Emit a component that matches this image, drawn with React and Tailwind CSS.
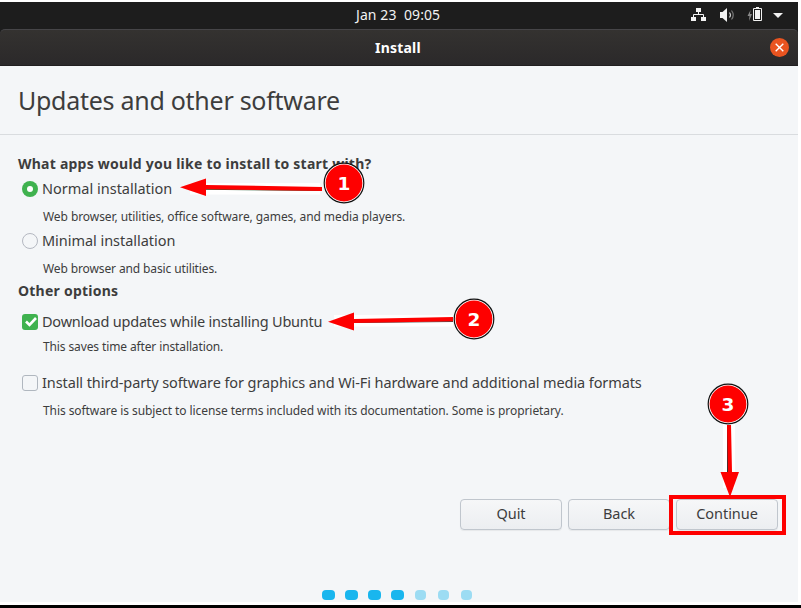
import React from "react";

function Heading({ className = "", children }) {
  return <h2 className={`flex h-5 items-center text-[14px] font-bold tracking-[0.235px] whitespace-nowrap ${className}`}>{children}</h2>;
}

function Option({ className = "", labelClass = "", control, children }) {
  return (
    <label className={`flex h-5 items-center gap-1 pl-1 text-[14.5px] whitespace-nowrap ${className}`}>
      {control}
      <span className={labelClass}>{children}</span>
    </label>
  );
}

function Note({ className = "", children }) {
  return <p className={`flex h-5 items-center pl-[25px] text-[12px] whitespace-nowrap ${className}`}>{children}</p>;
}

function Button({ children, className = "" }) {
  return (
    <button className={`h-[31px] w-[102px] rounded-[4px] border border-[#c0c6cd] bg-linear-to-b from-[#f6f7f8] to-[#eceef1] pb-px text-[14.5px] tracking-[-0.05px] shadow-[0_1px_1px_rgba(0,0,0,0.06)] ${className}`}>
      {children}
    </button>
  );
}

function Badge({ x, y, n }) {
  return (
    <g>
      <circle cx={x} cy={y} r="19.8" fill="#fff" stroke="#111" strokeWidth="1.200" />
      <circle cx={x} cy={y} r="18.4" fill="#fe0000" />
      <text x={x} y={y + 7} textAnchor="middle" fill="#fff" fontFamily="DejaVu Sans, sans-serif" fontWeight="700" fontSize="18.5">{n}</text>
    </g>
  );
}

function Annotations() {
  return (
    <svg className="pointer-events-none absolute top-0 left-0" width="801" height="608" viewBox="0 0 801 608">
      <path d="M190 183H320V194.500H190Z" fill="#fff" />
      <path d="M205 189.300L322 190.500" stroke="#235c35" strokeWidth="1" />
      <path d="M180 187.300L206 178.500V185L322 187V191L206 189.300V196Z" fill="#fe0000" />
      <path d="M334 315H453V326.500H334Z" fill="#fff" />
      <path d="M354 322.500L453 321.500" stroke="#444" strokeWidth="1" />
      <path d="M328 321.800L354 312.500V319L453 317V321.300L354 323V330.500Z" fill="#fe0000" />
      <path d="M723 424H735V488H723Z" fill="#fff" />
      <path d="M727.500 425V473" stroke="#333" strokeWidth="1" />
      <path d="M727 425H731L732 472H739L730 497L720.500 472H728Z" fill="#fe0000" />
      <rect x="671" y="497" width="113" height="36" fill="none" stroke="#fe0000" strokeWidth="4" />
      <Badge x={344} y={183} n="1" />
      <Badge x={474} y={319} n="2" />
      <Badge x={728} y={404} n="3" />
    </svg>
  );
}

function TrayIcons() {
  return (
    <svg className="ml-auto" width="107" height="27" viewBox="691 2 107 27" fill="#f2f2f2">
      <path d="M696 8h5v4h-5zM691 17h5v4h-5zM701 17h5v4h-5z" />
      <path d="M698.500 12v3M693.500 17v-2.500h10v2.500" fill="none" stroke="#f2f2f2" strokeWidth="1" />
      <path d="M720 12h2.500l4.500-4v14l-4.500-4H720z" />
      <path d="M729.500 12.500q2 2.500 0 5" fill="none" stroke="#ccc" strokeWidth="1.200" />
      <path d="M731.500 10.500q3.500 4.500 0 9" fill="none" stroke="#777" strokeWidth="1.200" />
      <path d="M750.500 10l-3 6h2l-.5 5 3-7h-2z" fill="#8a8a8a" />
      <path d="M753.500 8.500h8v12h-8z" fill="none" stroke="#f2f2f2" strokeWidth="1" />
      <path d="M755 10h5v9h-5zM756 7h3v2h-3z" />
      <path d="M773 13h10l-5 5z" />
    </svg>
  );
}

const dots = [true, true, true, true, false, false, false];

export default function App() {
  return (
    <div className="relative flex h-[608px] w-[801px] flex-col overflow-hidden bg-white pt-[2px] font-['Noto_Sans',sans-serif] text-[#3d3d3d]">
      <div className="flex h-[600px] w-[798px] flex-col bg-[#1d1d1d]">
        <header className="flex h-[27px] shrink-0 items-center text-[#f2f2f2]">
          <span className="ml-[356px] pb-[2px] text-[14px] tracking-[0.09px] whitespace-pre">Jan 23  09:05</span>
          <TrayIcons />
        </header>
        <div className="flex h-[37px] shrink-0 items-center rounded-t-[5px] border-t border-b border-t-[#464548] border-b-[#211f20] bg-linear-to-b from-[#343230] to-[#2b292a] text-white">
          <span className="ml-[375px] text-[14px] font-bold tracking-[0.2px]">Install</span>
          <span className="mr-[9px] ml-auto flex size-[19px] items-center justify-center rounded-full bg-[#e95420]">
            <svg width="9" height="9" viewBox="0 0 9 9" stroke="#fff" strokeWidth="1.400"><path d="M.7.7l7.600 7.600M8.300.7l-7.600 7.600" /></svg>
          </span>
        </div>
        <main className="flex flex-1 flex-col bg-[#f4f6f8]">
          <div className="flex h-[69px] items-center border-b border-[#d9dcdf] pt-[2px] pl-[18px]">
            <h1 className="text-[25px] tracking-[-0.27px] whitespace-nowrap">Updates and other software</h1>
          </div>
          <section className="flex flex-col pl-[18px]">
            <Heading className="mt-[18px]">What apps would you like to install to start with?</Heading>
            <Option className="mt-[6px]" control={<span className="flex size-4 items-center justify-center rounded-full bg-[#3fb24f]"><span className="size-[6px] rounded-full bg-white" /></span>}>Normal installation</Option>
            <Note className="mt-[8px] tracking-[-0.07px]">Web browser, utilities, office software, games, and media players.</Note>
            <Option className="mt-[4px]" labelClass="tracking-[-0.04px]" control={<span className="size-4 rounded-full border border-[#b4b8c1]" />}>Minimal installation</Option>
            <Note className="mt-[8px] tracking-[-0.12px]">Web browser and basic utilities.</Note>
            <Heading className="mt-[1px]">Other options</Heading>
            <Option className="mt-[12px]" labelClass="tracking-[-0.22px]" control={<span className="flex size-4 items-center justify-center rounded-[3px] bg-[#3fb24f]"><svg width="16" height="16" fill="none" stroke="#fff" strokeWidth="2.600"><path d="M4 7.500l3.500 3.500L14 4" /></svg></span>}>Download updates while installing Ubuntu</Option>
            <Note className="mt-[5px] tracking-[-0.12px]">This saves time after installation.</Note>
            <Option className="mt-[16px]" labelClass="tracking-[-0.095px]" control={<span className="size-4 rounded-[3px] border border-[#b0b7bf]" />}>Install third-party software for graphics and Wi-Fi hardware and additional media formats</Option>
            <Note className="mt-[8px] tracking-[-0.075px]">This software is subject to license terms included with its documentation. Some is proprietary.</Note>
          </section>
          <div className="mt-[78px] flex gap-[6px] pl-[460px]">
            <Button>Quit</Button>
            <Button>Back</Button>
            <Button>Continue</Button>
          </div>
          <div className="mt-[60px] flex gap-[10px] pl-[322px]">
            {dots.map((on, i) => (
              <span key={i} className={`h-[10px] rounded-[4px] ${on ? "w-[13px] bg-[#19b6ee]" : "mr-px ml-px w-[11px] bg-[#9cdcf3]"}`} />
            ))}
          </div>
        </main>
      </div>
      <div className="mt-[3px] h-[3px] bg-black" />
      <Annotations />
    </div>
  );
}
